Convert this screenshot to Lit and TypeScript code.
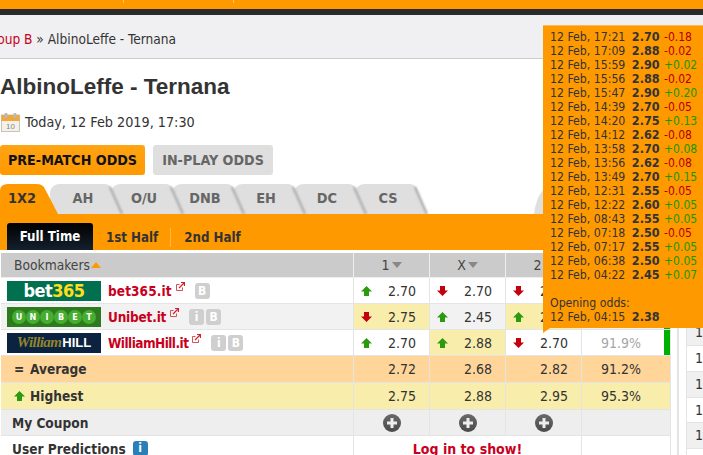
import { LitElement, html, css, svg } from "lit";
import { customElement } from "lit/decorators.js";

const hist: [string, string, string][] = [
  ["17:21", "2.70", "-0.18"], ["17:09", "2.88", "-0.02"], ["15:59", "2.90", "+0.02"],
  ["15:56", "2.88", "-0.02"], ["15:47", "2.90", "+0.20"], ["14:39", "2.70", "-0.05"],
  ["14:20", "2.75", "+0.13"], ["14:12", "2.62", "-0.08"], ["13:58", "2.70", "+0.08"],
  ["13:56", "2.62", "-0.08"], ["13:49", "2.70", "+0.15"], ["12:31", "2.55", "-0.05"],
  ["12:22", "2.60", "+0.05"], ["08:43", "2.55", "+0.05"], ["07:18", "2.50", "-0.05"],
  ["07:17", "2.55", "+0.05"], ["06:38", "2.50", "+0.05"], ["04:22", "2.45", "+0.07"],
];

const up = svg`<svg class="arr" width="11" height="10" viewBox="0 0 11 10"><path d="M5.5 0 11 5.5H8V10H3V5.5H0z" fill="#2b9a0e"/></svg>`;
const down = svg`<svg class="arr" width="11" height="10" viewBox="0 0 11 10"><path d="M5.5 10 11 4.5H8V0H3V4.5H0z" fill="#c4000c"/></svg>`;
const ext = svg`<svg class="ext" width="9" height="9" viewBox="0 0 9 9"><path d="M0.5 2.5h3M0.5 2.5v6h6v-3" fill="none" stroke="#d8505a"/><path d="M3 6 8 1M5 .5h3.5V4" fill="none" stroke="#d0202e" stroke-width="1.2"/></svg>`;
const plus = svg`<svg width="18" height="18" viewBox="0 0 18 18"><defs><linearGradient id="pg" x1="0" y1="0" x2="0" y2="1"><stop offset="0" stop-color="#6a6a6a"/><stop offset="1" stop-color="#4a4a4a"/></linearGradient></defs><circle cx="9" cy="9" r="9" fill="url(#pg)"/><path d="M9 4v10M4 9h10" stroke="#eee" stroke-width="3"/></svg>`;
const cal = svg`<svg width="19" height="19" viewBox="0 0 19 19"><rect x="0.5" y="2" width="18" height="16.5" fill="#f4f1ea" stroke="#c9c4b8"/><rect x="0.5" y="2" width="18" height="6" fill="#f0a83c"/><rect x="3.5" y="0" width="3" height="5" rx="1" fill="#b9b9b9"/><rect x="12.5" y="0" width="3" height="5" rx="1" fill="#b9b9b9"/><text x="9.5" y="16" font-size="8" text-anchor="middle" fill="#888" font-family="Liberation Sans">10</text></svg>`;
const tabShape = svg`<svg class="shape" width="75" height="30" viewBox="0 0 75 30"><path d="M0 30V8Q2 0 10 0H54Q60 0 62 5L72 30Z" fill="#dfdfdf"/><path d="M60 3 72 30" fill="none" stroke="#a8a8a8" stroke-width="2" class="sh"/></svg>`;
const tabOn = svg`<svg class="shape" width="60" height="30" viewBox="0 0 60 30"><path d="M0 30V7Q0 0 8 0H36Q43 0 45 5L58 30Z" fill="#ff9900"/></svg>`;
const ghost = svg`<svg class="ghost" width="169" height="30" viewBox="0 0 169 30"><path d="M0 30Q2 14 9 6V30Z" fill="#dfdfdf"/></svg>`;

type Cell = { v: string; a: "u" | "d"; hl?: boolean };
const rows: { logo: string; name: string; ls: number; info: boolean; cells: Cell[]; pay: string }[] = [
  { logo: "b365", name: "bet365.it", ls: 0.1, info: false, cells: [{ v: "2.70", a: "u" }, { v: "2.70", a: "d" }, { v: "2.70", a: "d" }], pay: "91.9%" },
  { logo: "uni", name: "Unibet.it", ls: -0.2, info: true, cells: [{ v: "2.75", a: "d", hl: true }, { v: "2.45", a: "u" }, { v: "2.95", a: "u", hl: true }], pay: "91.9%" },
  { logo: "wh", name: "WilliamHill.it", ls: -0.55, info: true, cells: [{ v: "2.70", a: "u" }, { v: "2.88", a: "u", hl: true }, { v: "2.70", a: "d" }], pay: "91.9%" },
];

@customElement("app-root")
export class AppRoot extends LitElement {
  static styles = css`
    :host { display: block; position: relative; width: 703px; height: 455px; overflow: hidden; background: #fff;
      font-family: "DejaVu Sans Condensed", "DejaVu Sans", sans-serif; font-stretch: condensed; font-size: 14px; color: #333; }
    .top { height: 9px; background: #ff9900; display: flex; }
    .top i { width: 1px; height: 3px; background: #ffc266; }
    .top i:nth-child(1) { margin-left: 123px; }
    .top i:nth-child(2) { margin-left: 109px; }
    .dark { height: 6px; background: #2b2b2b; }
    .crumb { height: 44px; box-sizing: border-box; background: #f0eff1; border-bottom: 1px solid #ccc;
      line-height: 48px; font-size: 13.6px; color: #333; white-space: nowrap; overflow: hidden; }
    .crumb a { color: #c8001e; margin-left: -17px; }
    h1 { margin: 0; padding-top: 14px; font-family: "Liberation Sans", Arial, sans-serif; font-stretch: normal; font-size: 22.5px; line-height: 28px; font-weight: bold; color: #333; height: 30px; }
    .date { display: flex; align-items: center; gap: 5px; margin-top: 9px; height: 20px; padding-left: 1px; font-size: 14.25px; }
    .btns { display: flex; gap: 8px; margin-top: 13px; }
    .btn { height: 30px; line-height: 30px; border-radius: 3px; font-weight: bold; font-size: 14.2px; text-align: center; width: 120px;
      background: #dfdfdf; color: #666; }
    .btn.on { background: linear-gradient(#ffa414, #ff9900); color: #111; width: 145px; }
    .tabs { display: flex; margin-top: 9px; height: 30px; }
    .tab { position: relative; flex: none; width: 61px; box-sizing: border-box; padding-left: 5px; height: 30px; line-height: 29px; text-align: center; font-weight: bold; font-size: 14.4px; color: #666; }
    .tab.on { color: #333; width: 50px; padding: 0 6px 0 0; }
    .tab span { position: relative; }
    .shape { position: absolute; left: 0; top: 0; }
    .sh { filter: blur(1px); }
    .ghost { margin-left: auto; flex: none; }
    .sub { height: 36px; background: #ff9900; box-sizing: border-box; padding: 9px 0 0 7px; display: flex; }
    .sub div { font-weight: bold; font-size: 13.2px; white-space: nowrap; color: #333; }
    .sub .on { background: linear-gradient(#000, #14202e); color: #fff; border-radius: 3px 3px 0 0; width: 86px; height: 27px; line-height: 27px; text-align: center; }
    .sub .n { border-right: 1px solid #ffb84d; height: 19px; line-height: 19px; margin-top: 5px; padding: 0 12px 0 13px; }
    .sub .n:last-child { border: 0; padding-left: 13px; }
    .wrap { display: flex; margin-top: 3px; }
    .t { margin-left: 1px; width: 670px; display: grid; grid-template-columns: 353px 76px 76px 76px 89px; flex: none; }
    .row { display: contents; }
    .row > div { box-sizing: border-box; border-bottom: 1px solid #e4e4e4; border-right: 1px solid #e4e4e4; height: 26px; display: flex; align-items: center; white-space: nowrap; }
    .hd > div { background: #cbcbcb; height: 25px; border-bottom-color: #eee; border-right-color: #eee; color: #444; }
    .hd .b { padding-left: 13px; font-size: 13.7px; }
    .hd .c { justify-content: center; }
    .caret { display: inline-block; width: 0; height: 0; border: 5px solid transparent; border-top: 6px solid #888; border-bottom: 0; margin-left: 2px; }
    .caret.o { border-top: 0; border-bottom: 6px solid #ff9900; margin-left: 1px; }
    .logo { width: 94px; height: 20px; margin-left: 6px; flex: none; display: flex; align-items: center; justify-content: center; white-space: nowrap; overflow: hidden; }
    .b365 { background: #00704f; color: #fff; font-weight: bold; font-size: 18px; font-stretch: normal; letter-spacing: -0.5px; }
    .b365 b { color: #ffdf1b; }
    .uni { background: #2e7a1e; }
    .uni span { width: 14px; height: 14px; border-radius: 50%; background: #45ad2f; color: #fff; font-size: 9px; font-weight: bold; text-align: center; line-height: 14px; }
    .wh { background: #0b2340; color: #fff; font-weight: bold; font-size: 13px; gap: 1px; font-family: "Liberation Sans", sans-serif; font-stretch: normal; }
    .wh em { color: #93852e; font-family: "Liberation Serif", serif; font-size: 15px; letter-spacing: -0.6px; }
    .name { color: #c8001e; font-size: 13.5px; font-weight: bold; margin-left: 7px; }
    .ext { align-self: flex-start; margin: 4px 0 0 4px; flex: none; }
    .bad { display: flex; gap: 2px; margin-left: 10px; }
    .bad span { width: 15px; height: 16px; border-radius: 3px; background: #cfcfcf; color: #fff; font-weight: bold; font-size: 12px; text-align: center; line-height: 16px; }
    .num { position: relative; justify-content: flex-end; padding-right: 13px; color: #333; }
    .num .arr { position: absolute; left: 7px; top: 8px; }
    .alt > div { background: #f2f2f2; }
    .alt > .hl, .row > .hl { background: #f9edac; }
    .pay { position: relative; justify-content: center; padding-right: 10px; color: #a6a6a6; }
    .bar { position: absolute; right: 0; top: 0; width: 6px; height: 25px; background: #00b000; }
    .avg > div { background: #ffd59a; height: 27px; }
    .hi > div { background: #f9edac; height: 27px; }
    .lab { font-weight: bold; font-size: 13.6px; padding-left: 13px; color: #333; gap: 7px; }
    .lab .eq { width: 9px; }
    .lab.h { gap: 5px; }
    .lab.p { padding-left: 11px; gap: 8px; }
    .avg .pay, .hi .pay { color: #333; }
    .cp > div { background: #eee; }
    .ctr { justify-content: center; }
    .log { grid-column: 2 / span 3; justify-content: center; color: #c8001e; font-weight: bold; }
    .inf { width: 15px; height: 15px; background: #2980b9; border-radius: 3px; color: #fff; font-size: 12px; text-align: center; line-height: 15px; font-weight: bold; margin-left: -1px; }
    .side { margin-left: 6px; display: flex; flex: none; }
    .strip { width: 2px; height: 202px; background: #e4e4e4; }
    .list { margin-left: 7px; width: 17px; height: 202px; border-left: 1px solid #e4e4e4; padding-top: 15.75px; box-sizing: border-box; overflow: hidden; }
    .list div { height: 25.75px; line-height: 25px; padding-left: 8px; border-bottom: 1px solid #e4e4e4; box-sizing: border-box; white-space: nowrap; }
    .list div:nth-child(odd) { background: #f0f0f0; }
    .tip { position: absolute; left: 543px; top: 25px; width: 160px; height: 303px; box-sizing: border-box; background: #ff9900; border-top: 1px solid #ffb84d; padding: 4px 0 0 7px; font-size: 12.2px; line-height: 14px; color: #333; white-space: nowrap; }
    .tip::after { content: ""; position: absolute; left: 0; top: 100%; border-top: 5px solid #ff9900; border-right: 7px solid transparent; }
    .tip b { font-size: 12.5px; margin-left: 3px; }
    .tip .m, .tip .p { font-size: 12px; margin-left: 1px; }
    .tip .m { color: #b00000; }
    .tip .p { color: #149a00; }
    .sp { height: 14px; }
  `;

  badge(info: boolean) {
    return html`<div class="bad">${info ? html`<span>i</span>` : ""}<span>B</span></div>`;
  }

  logo(k: string) {
    if (k === "b365") return html`<div class="logo b365">bet<b>365</b></div>`;
    if (k === "uni") return html`<div class="logo uni">${[..."UNIBET"].map((c) => html`<span>${c}</span>`)}</div>`;
    return html`<div class="logo wh"><em>William</em>HILL</div>`;
  }

  render() {
    return html`
      <div class="top"><i></i><i></i></div>
      <div class="dark"></div>
      <div class="crumb"><a>Group B</a> » AlbinoLeffe - Ternana</div>
      <h1>AlbinoLeffe - Ternana</h1>
      <div class="date">${cal}<span>Today, 12 Feb 2019, 17:30</span></div>
      <div class="btns"><div class="btn on">PRE-MATCH ODDS</div><div class="btn">IN-PLAY ODDS</div></div>
      <div class="tabs">
        <div class="tab on" style="z-index:9">${tabOn}<span>1X2</span></div>
        ${["AH", "O/U", "DNB", "EH", "DC", "CS"].map((t, i) => html`<div class="tab" style="z-index:${8 - i}">${tabShape}<span>${t}</span></div>`)}
        ${ghost}
      </div>
      <div class="sub"><div class="on">Full Time</div><div class="n">1st Half</div><div class="n">2nd Half</div></div>
      <div class="wrap">
        <div class="t">
          <div class="row hd">
            <div class="b">Bookmakers<span class="caret o"></span></div>
            <div class="c">1<span class="caret"></span></div>
            <div class="c">X<span class="caret"></span></div>
            <div class="c">2<span class="caret"></span></div>
            <div></div>
          </div>
          ${rows.map((r, i) => html`
            <div class="row ${i === 1 ? "alt" : ""}">
              <div>${this.logo(r.logo)}<span class="name" style="letter-spacing:${r.ls}px">${r.name}</span>${ext}${this.badge(r.info)}</div>
              ${r.cells.map((c) => html`<div class="num ${c.hl ? "hl" : ""}">${c.a === "u" ? up : down}${c.v}</div>`)}
              <div class="pay">${r.pay}<span class="bar"></span></div>
            </div>`)}
          <div class="row avg">
            <div class="lab"><span class="eq">=</span>Average</div>
            <div class="num">2.72</div><div class="num">2.68</div><div class="num">2.82</div>
            <div class="pay">91.2%</div>
          </div>
          <div class="row hi">
            <div class="lab h">${up}Highest</div>
            <div class="num">2.75</div><div class="num">2.88</div><div class="num">2.95</div>
            <div class="pay">95.3%</div>
          </div>
          <div class="row cp">
            <div class="lab p">My Coupon</div>
            <div class="ctr">${plus}</div><div class="ctr">${plus}</div><div class="ctr">${plus}</div>
            <div></div>
          </div>
          <div class="row">
            <div class="lab p">User Predictions<span class="inf">i</span></div>
            <div class="log">Log in to show!</div>
            <div></div>
          </div>
        </div>
        <div class="side">
          <div class="strip"></div>
          <div class="list">${[1, 2, 3, 4, 5, 6, 7, 8].map(() => html`<div>17:30</div>`)}</div>
        </div>
      </div>
      <div class="tip">
        ${hist.map(([t, o, d]) => html`<div>12 Feb, ${t} <b>${o}</b> <span class="${d[0] === "-" ? "m" : "p"}">${d}</span></div>`)}
        <div class="sp"></div>
        <div>Opening odds:</div>
        <div>12 Feb, 04:15 <b>2.38</b></div>
      </div>
    `;
  }
}
